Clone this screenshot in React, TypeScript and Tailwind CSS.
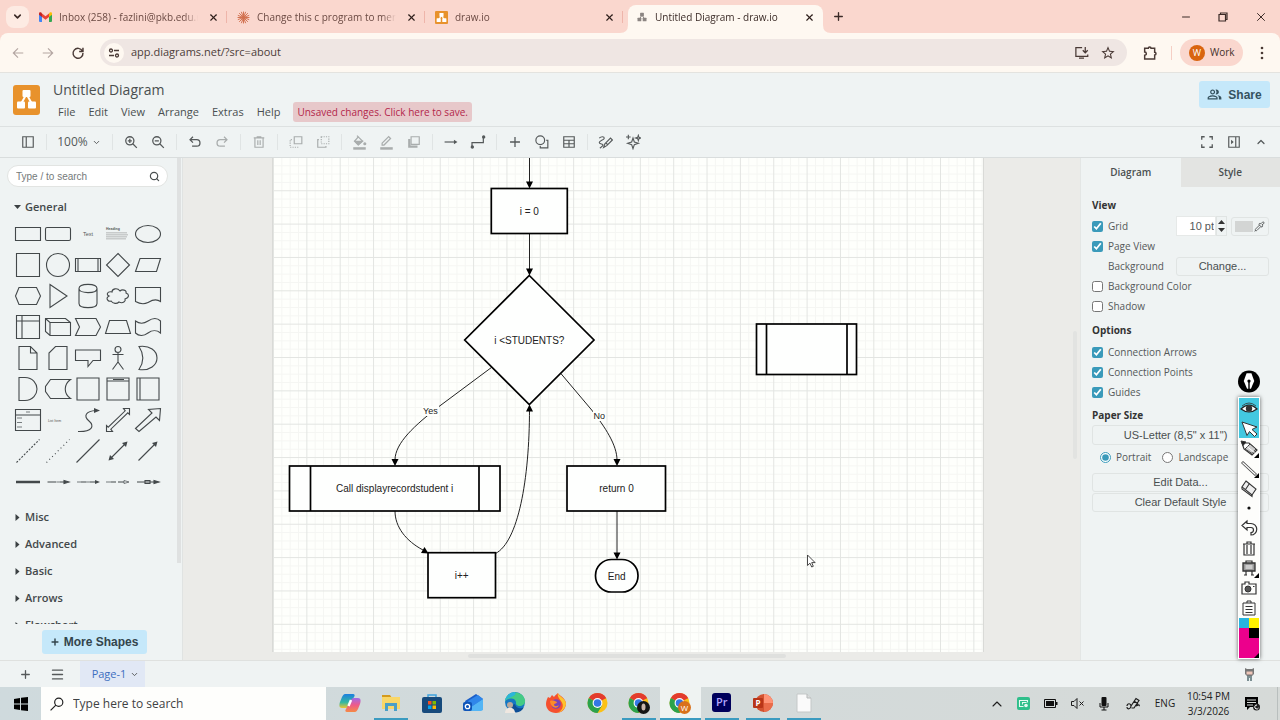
import type { ReactNode } from "react";
import { MdStarBorder, MdOutlinePeopleAlt } from "react-icons/md";
import { ChevronDown, ChevronUp, X, Plus, Menu, Search, Pipette, Minus } from "lucide-react";

const ui = "font-['Open_Sans','Noto_Sans',sans-serif]";
const arial = "font-['Liberation_Sans',Arial,sans-serif]";

function Ico({ size = 16, box = "0 0 24 24", w = 2, children }: { size?: number; box?: string; w?: number; children: ReactNode }) {
  return (
    <svg width={size} height={size} viewBox={box} fill="none" stroke="currentColor" strokeWidth={w} aria-hidden="true" className="shrink-0">
      {children}
    </svg>
  );
}

/* ---------- Browser chrome ---------- */

function DrawioLogo({ size, fg = "#fff", bg = "#e8922c" }: { size: number; fg?: string; bg?: string }) {
  return (
    <svg width={size} height={size} viewBox="0 0 24 24" aria-hidden="true" className="shrink-0">
      <rect width="24" height="24" rx="2" fill={bg} />
      <path d="M12 8 7 16M12 8l5 8" stroke={fg} strokeWidth="2" />
      <rect x="8.2" y="3.500" width="7.600" height="7" rx="1" fill={fg} />
      <rect x="3" y="13.500" width="7.600" height="7" rx="1" fill={fg} />
      <rect x="13.400" y="13.500" width="7.600" height="7" rx="1" fill={fg} />
    </svg>
  );
}

const GmailIcon = (
  <svg width="13" height="10" viewBox="0 0 26 20" aria-hidden="true" className="shrink-0">
    <path d="M0 3v15a2 2 0 0 0 2 2h4V7z" fill="#4285f4" />
    <path d="M26 3v15a2 2 0 0 1-2 2h-4V7z" fill="#34a853" />
    <path d="M6 3v7l7 5.5 7-5.5V3l-7 5.5z" fill="#ea4335" />
    <path d="M0 3v2.5L6 10V2.5L4.500 1C2.500-.5 0 .8 0 3z" fill="#c5221f" />
    <path d="M26 3v2.500L20 10V2.500L21.500 1C23.500-.5 26 .8 26 3z" fill="#fbbc04" />
  </svg>
);

const ClaudeIcon = (
  <svg width="13" height="13" viewBox="-12 -12 24 24" stroke="#d2714f" strokeWidth="1.800" aria-hidden="true" className="shrink-0">
    <path d="M0-11V11M-11 0H11M-8-8 8 8M8-8-8 8M-4-10.500 4 10.500M4-10.500-4 10.500M-10.500-4 10.500 4M-10.500 4 10.500-4" />
  </svg>
);

function Tab({ icon, title, active }: { icon: ReactNode; title: string; active?: boolean }) {
  return (
    <div
      className={
        active
          ? "relative flex h-7 w-[195px] items-center self-end rounded-t-lg bg-[#fef8f1] pb-1 pl-2 text-[#3b2b27]"
          : "flex h-7 w-[198px] items-center self-end pb-1 pl-[10px] text-[#6b4a43]"
      }
    >
      {active && (
        <svg width="211" height="8" viewBox="0 0 211 8" className="absolute bottom-0 -left-2" aria-hidden="true">
          <path d="M0 8Q8 8 8 0V8zM203 0Q203 8 211 8H203z" fill="#fef8f1" />
        </svg>
      )}
      {icon}
      <span className="ml-[7px] w-[139px] overflow-hidden text-[10px] whitespace-nowrap [mask-image:linear-gradient(to_right,black_90%,transparent)]">{title}</span>
      <button aria-label={"Close " + title} className="ml-[7px] flex w-4 justify-center text-[#2e1f1c]">
        <X size={11} strokeWidth={2.500} />
      </button>
      {!active && <span className="ml-auto h-3 w-px bg-[#eeb5aa]" />}
    </div>
  );
}

function TabStrip() {
  return (
    <div className="flex h-[33px] shrink-0 items-center bg-[#fad7ce] pl-[6px] text-[#3b2b27]">
      <button aria-label="Search tabs" className="flex h-[22px] w-[23px] items-center justify-center rounded-lg bg-[#fdebe3]">
        <ChevronDown size={11} strokeWidth={3.500} />
      </button>
      <div className="flex h-full items-center">
        <Tab icon={GmailIcon} title="Inbox (258) - fazlini@pkb.edu.my" />
        <Tab icon={ClaudeIcon} title="Change this c program to merm" />
        <Tab icon={<DrawioLogo size={13} />} title="draw.io" />
        <div className="flex h-full pl-[5px]">
          <Tab active icon={<DrawioLogo size={12} bg="none" fg="#8c8582" />} title="Untitled Diagram - draw.io" />
        </div>
      </div>
      <button aria-label="New tab" className="ml-[9px]">
        <Plus size={13} strokeWidth={2.500} />
      </button>
      <div className="ml-auto flex items-center">
        <button aria-label="Minimize" className="flex w-[37px] justify-center"><Minus size={12} strokeWidth={2} /></button>
        <button aria-label="Restore" className="flex w-[38px] justify-center">
          <Ico size={10} box="0 0 10 10" w={1.200}><path d="M1 2.500h6.500V9H1zM2.500 2.500V1H9v6.500H7.500" /></Ico>
        </button>
        <button aria-label="Close window" className="flex w-[38px] justify-center"><X size={14} strokeWidth={1.700} /></button>
      </div>
    </div>
  );
}

function AddressBar() {
  return (
    <div className="flex h-10 shrink-0 items-center rounded-t-lg border-b border-[#e4e3df] bg-[#fef8f1] pl-[3px] text-[#4a3a36]">
      <button aria-label="Back" className="flex w-[30px] justify-center text-[#b3a6a2]">
        <Ico size={14}><path d="M21 12H4M12 4l-8 8 8 8" /></Ico>
      </button>
      <button aria-label="Forward" className="flex w-[30px] justify-center text-[#b3a6a2]">
        <Ico size={14}><path d="M3 12h17M12 4l8 8-8 8" /></Ico>
      </button>
      <button aria-label="Reload" className="flex w-[30px] justify-center">
        <Ico size={14} w={2.500}><path d="M19.500 8.500A8.500 8.500 0 1 0 20.500 12M20.500 3v6.500H14" /></Ico>
      </button>
      <div className="ml-[7px] flex h-[27px] flex-1 items-center rounded-full bg-[#efe6e3] pr-3 pl-1">
        <button aria-label="Site information" className="flex size-5 items-center justify-center rounded-full bg-[#fef8f1]">
          <Ico size={12} w={2.600}><circle cx="6" cy="7" r="3" /><path d="M12 7h10M2 17h10" /><circle cx="18" cy="17" r="3" /></Ico>
        </button>
        <input aria-label="Address" readOnly value="app.diagrams.net/?src=about" className="ml-[7px] min-w-0 flex-1 bg-transparent text-[11px] text-[#4d3d39] outline-none" />
        <button aria-label="Install app" className="flex w-[27px] justify-center">
          <Ico size={15} w={2}><path d="M13 4H3v14h19v-3M8 21h8M18 3v9M14 8.500l4 4 4-4" /></Ico>
        </button>
        <button aria-label="Bookmark" className="-mr-[6px] flex w-[26px] justify-center"><MdStarBorder size={16} /></button>
      </div>
      <button aria-label="Extensions" className="ml-[15px]">
        <Ico size={16} w={2.200}><path d="M4 5h5.500a2 2 0 1 1 4 0H19v6a2 2 0 1 1 0 4v6H4v-5.500a2.500 2.500 0 0 0 0-5z" /></Ico>
      </button>
      <span className="ml-[13px] h-[14px] w-px bg-[#f5cfc5]" />
      <button className="ml-2 flex h-[27px] w-[63px] items-center rounded-full bg-[#fad7ce] pl-[9px] text-[10px] text-[#44302b]">
        <span className="mr-[5px] flex size-4 items-center justify-center rounded-full bg-[#d9640f] text-[9px] text-white">W</span>
        Work
      </button>
      <button aria-label="Menu" className="mr-3 ml-[12px] flex w-[13px] justify-center">
        <svg width="4" height="14" fill="currentColor" aria-hidden="true"><circle cx="2" cy="2" r="1.300" /><circle cx="2" cy="7" r="1.300" /><circle cx="2" cy="12" r="1.300" /></svg>
      </button>
    </div>
  );
}

/* ---------- Application header ---------- */

function Header() {
  return (
    <header className="flex h-[54px] shrink-0 items-start border-b border-[#dde1e1] bg-[#eff3f3] text-[#4a4f50]">
      <svg width="27" height="30" viewBox="0 0 27 30" className="mt-3 ml-[13px]" aria-hidden="true">
        <rect width="27" height="30" rx="3" fill="#e8922c" />
        <path d="M13.500 9 8 19M13.500 9l5.500 10" stroke="#fff" strokeWidth="2" />
        <rect x="9.500" y="5" width="8" height="7" rx="1" fill="#fff" />
        <rect x="4" y="16.500" width="8" height="7" rx="1" fill="#fff" />
        <rect x="15" y="16.500" width="8" height="7" rx="1" fill="#fff" />
      </svg>
      <div className="ml-[13px] pt-[6px]">
        <h1 className="text-[14px] leading-[22px]">Untitled Diagram</h1>
        <nav className="mt-px flex h-5 items-center gap-[13px] pl-[5px] text-[11px]">
          <a href="#file">File</a>
          <a href="#edit">Edit</a>
          <a href="#view">View</a>
          <a href="#arrange">Arrange</a>
          <a href="#extras">Extras</a>
          <a href="#help">Help</a>
          <button className="h-5 rounded-[3px] bg-[#e7c8ca] px-1 text-[10px] whitespace-nowrap text-[#b3264b]">Unsaved changes. Click here to save.</button>
        </nav>
      </div>
      <button className={`mt-2 mr-[10px] ml-auto flex h-[27px] w-[71px] items-center justify-center gap-[6px] rounded-[3px] bg-[#c5e8fa] text-[12px] font-bold text-[#35525f] ${arial}`}>
        <MdOutlinePeopleAlt size={15} />
        Share
      </button>
    </header>
  );
}

function Tool({ label, dim, children }: { label: string; dim?: boolean; children: ReactNode }) {
  return (
    <button aria-label={label} className={dim ? "flex w-[27px] justify-center text-[#a9adad]" : "flex w-[27px] justify-center text-[#55595a]"}>
      {children}
    </button>
  );
}

const Sep = () => (
  <span className="flex w-[10px] shrink-0 justify-center"><span className="h-4 w-px bg-[#e0e4e4]" /></span>
);

function Toolbar() {
  return (
    <div className="flex h-[31px] shrink-0 items-center border-b border-[#d9dddd] bg-[#eff3f3] pl-[14px]">
      <Tool label="Shapes panel"><Ico size={14}><path d="M3 3h18v18H3zM9 3v18" /></Ico></Tool>
      <Sep />
      <button className="flex h-5 w-[56px] items-center justify-center gap-1 text-[12px] text-[#55595a]">
        100%<ChevronDown size={9} strokeWidth={2.500} />
      </button>
      <Sep />
      <Tool label="Zoom in"><Ico size={14} w={2.200}><circle cx="10" cy="10" r="7" /><path d="m15 15 7 7M10 6.500v7M6.500 10h7" /></Ico></Tool>
      <Tool label="Zoom out"><Ico size={14} w={2.200}><circle cx="10" cy="10" r="7" /><path d="m15 15 7 7M6.500 10h7" /></Ico></Tool>
      <Sep />
      <Tool label="Undo"><Ico size={14} w={2.200}><path d="M8.500 3 3.500 8l5 5M4 8h11a5.500 5.500 0 0 1 0 11H7" /></Ico></Tool>
      <Tool label="Redo" dim><Ico size={14} w={2.200}><path d="m15.500 3 5 5-5 5M20 8H9a5.500 5.500 0 0 0 0 11h8" /></Ico></Tool>
      <Sep />
      <Tool label="Delete" dim><Ico size={14} w={2}><path d="M3 5h18M9 5V3h6v2M5 5v16h14V5M10 9v8M14 9v8" /></Ico></Tool>
      <Sep />
      <Tool label="To front" dim><Ico size={14} w={2}><path d="M9 3h13v12H9z" /><path d="M5 8H2v13h13v-3" strokeDasharray="2 2" /></Ico></Tool>
      <Tool label="To back" dim><Ico size={14} w={2}><path d="M9 3h13v12H9z" strokeDasharray="2 2" /><path d="M5 8H3v13h14v-2" /></Ico></Tool>
      <Sep />
      <Tool label="Fill color" dim>
        <Ico size={15} w={2}><path d="M8 1l3 3M10 3l7 7-7 6-6-6z" /><path d="M5 10h11l-6 5.500z" fill="currentColor" /><circle cx="20.500" cy="14" r="1.500" fill="currentColor" /><path d="M2 21.500h20" strokeWidth="4" /></Ico>
      </Tool>
      <Tool label="Line color" dim><Ico size={15} w={2}><path d="M5 13 15.500 2.500l3 3L8 16H5z" /><path d="M2 21.500h20" strokeWidth="4" /></Ico></Tool>
      <Tool label="Shadow" dim><Ico size={14} w={2}><path d="M7 3h14v13H7z" /><path d="M4 7v13h14" strokeWidth="4" /></Ico></Tool>
      <Sep />
      <Tool label="Connection"><Ico size={14} w={2}><path d="M1 12h18" /><path d="m17 8 6 4-6 4z" fill="currentColor" stroke="none" /></Ico></Tool>
      <Tool label="Waypoints"><Ico size={16} w={1.800}><path d="M3 19v-6h17V5" /><circle cx="3.500" cy="19.500" r="1.600" fill="currentColor" /><circle cx="20.500" cy="4.500" r="1.600" fill="currentColor" /></Ico></Tool>
      <Sep />
      <Tool label="Insert"><Ico size={14} w={2.200}><path d="M12 3.500v17M3.500 12h17" /></Ico></Tool>
      <Tool label="Shapes"><Ico size={14} w={2}><circle cx="9" cy="9" r="7.500" /><path d="M19 9h3v13H9v-3" /></Ico></Tool>
      <Tool label="Table"><Ico size={14} w={2}><path d="M3 3h18v18H3zM3 9h18M3 15h18M12 9v12" /></Ico></Tool>
      <Sep />
      <Tool label="Freehand"><Ico size={15} w={1.800}><path d="M2 5c3-3 8-3 8 0S2 9 2 12s6 2 6 4-4 4-5 5M9 20l2-6 9-9 3 3-9 9zM13 13l3 3" /></Ico></Tool>
      <Tool label="Generate"><Ico size={16} w={1.700}><path d="m12 6 2 6 6 2-6 2-2 6-2-6-6-2 6-2zM5 1v7M1.500 4.500h7M20 2l1 3 3 1-3 1-1 3-1-3-3-1 3-1z" /></Ico></Tool>
      <div className="mr-[6px] ml-auto flex items-center">
        <Tool label="Fullscreen"><Ico size={14} w={2.200}><path d="M8 3H3v5M16 3h5v5M8 21H3v-5M16 21h5v-5" /></Ico></Tool>
        <Tool label="Format panel"><Ico size={14} w={2}><path d="M3 3h18v18H3zM15 3v18" /><path d="m7 8 4.500 4L7 16z" fill="currentColor" stroke="none" /></Ico></Tool>
        <Tool label="Collapse"><ChevronUp size={12} strokeWidth={2.500} /></Tool>
      </div>
    </div>
  );
}

/* ---------- Shape library ---------- */

const shapes: ReactNode[] = [
  <path d="M-12.500-6.500h25v13h-25z" />,
  <rect x="-12.500" y="-6.500" width="25" height="13" rx="1.500" />,
  <text x="0" y="2" fontSize="5.500" textAnchor="middle" fill="#555" stroke="none">Text</text>,
  <g stroke="none" fill="#555"><text x="-12" y="-4" fontSize="3.500" fontWeight="bold">Heading</text><path d="M-12-1.500h21v.7h-21zM-12 .5H10v.7h-22zM-12 2.500H9v.7h-21zM-12 4.500H8v.7h-20z" opacity=".5" /></g>,
  <ellipse rx="12.500" ry="8.500" />,
  <path d="M-11.500-11.500h23v23h-23z" />,
  <circle r="11.500" />,
  <path d="M-12.500-6.500h25v13h-25zM-10-6.500v13M10-6.500v13" />,
  <path d="M0-11.500 11.500 0 0 11.500-11.500 0z" />,
  <path d="M-8-6.500h20.500l-4 13h-21z" />,
  <path d="M-9-8.500H8.500l4 8.500-4 8.500H-9l-3.500-8.500z" />,
  <path d="M-8-11.500 9 0-8 11.500z" />,
  <path d="M-9-7.500c0-5.500 18-5.500 18 0v15c0 5.500-18 5.500-18 0zc0 5.500 18 5.500 18 0" />,
  <path d="M-6-4c-5-1-6 3-3 4-4 2-1 6 2 5 2 3 6 3 8 1 4 2 7-1 6-3 5-2 4-5 1-6 1-3-4-4-6-2-3-4-8-2-8 1z" />,
  <path d="M-12.500-8.500h25v14C7 1.500 1 6 0 6.500c-4 2-9 1-12.500-1z" />,
  <path d="M-11.500-11.500h23v23h-23zM-6-11.500v23M-11.500-6h23" />,
  <path d="M-12.500-8.500h20l5 4v13h-20.500l-4.500-4zM-12.500-8.500l4.500 4v13M-8-4.500h20.500" />,
  <path d="M-12.500-8.500H8L12.500 0 8 8.500h-20.500L-8.500 0z" />,
  <path d="M-8.500-6.500h17l4 13h-25z" />,
  <path d="M-12.500-6c4 3 8 3 12.500 0S9-9.500 12.500-6V6C9 3 4 3 0 6s-9 3.500-12.500 0z" />,
  <path d="M-9-11.500H2.500L9-5v16.500H-9zM2.500-11.500V-5H9" />,
  <path d="M-2.500-11.500H9v23H-9V-5z" />,
  <path d="M-12.500-8h25V2.500H5L0 8.500v-6h-12.500z" />,
  <path d="M0-6v10M0 4l-5.500 7.500M0 4l5.500 7.500M-5.500-3.500h11M3-8.500a3 3 0 1 1-6 0 3 3 0 1 1 6 0" />,
  <path d="M-9-11.500C2-13 9-7 9 0S2 13-9 11.500C-4 4-4-4-9-11.500z" />,
  <path d="M-9-11.500h6C5-11.500 9-5 9 0S5 11.500-3 11.500h-6z" />,
  <path d="M-7.500-9.500h20c-7 5-7 14 0 19h-20l-5-7v-5z" />,
  <path d="M-11-11h22v22h-22z" />,
  <path d="M-11-11h22v22h-22zM-11-8h22M-5-9.500H6" />,
  <path d="M-11-11h22v22h-22zM-8-11v22" />,
  <g><path d="M-12.500-10.500h25v21h-25zM-12.500-5h25" /><path d="M-2-8h4M-11-2h5M-11 2.500h5M-11 7h5" strokeWidth=".7" /></g>,
  <text x="-3.500" y="1.500" fontSize="3.500" textAnchor="middle" fill="#555" stroke="none">List Item</text>,
  <g><path d="M-10 11.500C4 12 7 6 1 1S-2-9 8-9.500" /><path d="M6-12l6 2.500-6 2.500z" fill="currentColor" stroke="none" /></g>,
  <path d="M-11.500 11.500v-6l1.700 1.700L7.200-9.200 5.500-11.500h6v6l-1.700-1.700L-7.200 9.200l1.700 2.300z" />,
  <path d="M-12.500 8.500 4-7 .5-10.500l12-1-1 12L8-3-9 11.500z" />,
  <path d="M-11.500 11.500l23-23" strokeDasharray="2 1.500" />,
  <path d="M-11.500 11.500l23-23" strokeDasharray="1 3" />,
  <path d="M-11.500 11.500l23-23" />,
  <g><path d="M-7 7l14-14" /><path d="M-9.500 9.500l1.500-5.500 4 4zM9.500-9.500l-1.500 5.500-4-4z" fill="currentColor" stroke="none" /></g>,
  <g><path d="M-9.500 9.500l17-17" /><path d="M9.500-9.500l-1.500 5.500-4-4z" fill="currentColor" stroke="none" /></g>,
  <path d="M-12 0h24" strokeWidth="2.500" />,
  <g><path d="M-10.500 0h9M2 0h6" /><path d="M-1 0h3" strokeWidth=".7" /><path d="M6-1.500l5 1.500-5 1.500z" fill="currentColor" /></g>,
  <g><path d="M-7 0h5M2 0h6" /><path d="M-11 0h4M-2 0h4" strokeWidth=".7" /><path d="M7-2l5 2-5 2z" fill="currentColor" stroke="none" /></g>,
  <g><path d="M-7 0h5M0 0h6" /><path d="M-12 0h5" strokeWidth=".7" /><path d="M6-1.500l5 1.500-5 1.500z" strokeWidth=".7" /></g>,
  <g><path d="M-11 0h20M-3-1.500h5v3h-5z" /><path d="M6-1.500l5 1.500-5 1.500z" fill="currentColor" /></g>,
];

function Section({ name, open }: { name: string; open?: boolean }) {
  return (
    <button className="flex h-[27px] w-full shrink-0 items-center pl-[14px] text-left text-[11px] font-semibold text-[#43484a]">
      <svg width="7" height="7" viewBox="0 0 7 7" fill="#3b4042" aria-hidden="true" className="mr-1">
        {open ? <path d="M0 1h7L3.500 5z" /> : <path d="M1.500 0v7l4-3.500z" />}
      </svg>
      {name}
    </button>
  );
}

function Sidebar() {
  return (
    <aside className="flex w-[183px] shrink-0 flex-col border-r border-[#e0e3e2] bg-[#eff3f3]">
      <div className="flex min-h-0 flex-1 justify-between">
        <div className="flex w-[168px] flex-col overflow-hidden">
          <label className="mt-[7px] ml-[7px] flex h-[22px] shrink-0 items-center rounded-full border border-[#e2e4e2] bg-white pr-[7px] pl-2 text-[#4a4f50]">
            <input aria-label="Search shapes" placeholder="Type / to search" className={`w-full bg-transparent text-[10px] outline-none placeholder:text-[#757a7a] ${arial}`} />
            <Search size={11} strokeWidth={2.600} className="shrink-0" />
          </label>
          <div className="mt-[7px]"><Section name="General" open /></div>
          <div className="-mt-[3px] ml-[13px] grid shrink-0 grid-cols-[repeat(5,30px)] text-[#43484a]">
            {shapes.map((s, i) => (
              <div key={i} className="flex h-[31px] items-center justify-center">
                <svg width="30" height="30" viewBox="-15 -15 30 30" fill="none" stroke="currentColor" strokeWidth="1.100" className={arial} aria-hidden="true">{s}</svg>
              </div>
            ))}
          </div>
          <div className="mt-[7px]">
            <Section name="Misc" />
            <Section name="Advanced" />
            <Section name="Basic" />
            <Section name="Arrows" />
            <Section name="Flowchart" />
          </div>
        </div>
        <div className="mr-px h-[87%] w-1 bg-[#dfe1e1]" />
      </div>
      <div className="flex h-9 shrink-0 justify-center pt-[6px] pl-[6px]">
        <button className={`flex h-6 w-[105px] items-center justify-center gap-1 rounded-[3px] bg-[#c5e8fa] text-[12px] font-bold whitespace-nowrap text-[#33444c] ${arial}`}>
          <Plus size={10} strokeWidth={3.500} />
          More Shapes
        </button>
      </div>
    </aside>
  );
}

/* ---------- Canvas ---------- */

const minorX = Array.from({ length: 86 }, (_, i) => 273.5 + i * 8.3375);
const minorY = Array.from({ length: 60 }, (_, i) => 157.4 + i * 8.3375);

function Flowchart() {
  return (
    <svg viewBox="273 158 710 494" width="710" height="494" className={`block bg-[#fefffc] ${arial}`} role="img" aria-label="Flowchart">
      {minorX.map((x, i) => i % 4 !== 0 && <path key={"x" + i} d={`M${x} 158V652`} stroke="#f5f6f3" />)}
      {minorY.map((y, i) => i % 4 !== 0 && <path key={"y" + i} d={`M273 ${y}H983`} stroke="#f5f6f3" />)}
      {minorX.map((x, i) => i % 4 === 0 && <path key={"mx" + i} d={`M${x} 158V652`} stroke="#e3e5e2" />)}
      {minorY.map((y, i) => i % 4 === 0 && <path key={"my" + i} d={`M273 ${y}H983`} stroke="#e3e5e2" />)}
      <g fill="none" stroke="#222" strokeWidth="1">
        <path d="M529.500 158V184M529.500 234V270" />
        <path d="M491.700 367.300 439 406.500C415 425 395 443 395 460" />
        <path d="M560.700 373.300 591.700 410C605 427 617 445 617 460" />
        <path d="M617 511V554" />
        <path d="M395 511C395 527 406 541 423 550" />
        <path d="M495.500 553.500C518 542 529.500 480 529.500 409" />
      </g>
      <g fill="#000">
        <path d="M526 181.500h7l-3.500 7zM526 268.500h7l-3.500 7zM391.500 459h7l-3.500 7zM613.500 459h7l-3.500 7zM613.500 552.500h7l-3.500 7zM526 411.500h7l-3.500-7zM428.500 553.500l-7.500-.5 3.500-6z" />
      </g>
      <g fill="#fefffe" stroke="#000" strokeWidth="1.700">
        <rect x="491.300" y="188.500" width="76" height="45" />
        <path d="M529.300 275.500 594 340 529.300 404.500 464.700 340z" />
        <rect x="289.500" y="466" width="210.500" height="45" />
        <path d="M310.500 466v45M479 466v45" />
        <rect x="567" y="466" width="98.500" height="45" />
        <rect x="428" y="552.700" width="67.500" height="45" />
        <rect x="595.500" y="559.500" width="42.500" height="32.500" rx="16" />
        <rect x="756.500" y="324" width="100" height="50.500" />
        <path d="M766.500 324v50.500M847 324v50.500" />
      </g>
      <path d="M422 406h17v10h-17zM593 411h13v10h-13z" fill="#fefffc" />
      <g fill="#222" fontSize="10" textAnchor="middle">
        <text x="529.300" y="215">i = 0</text>
        <text x="529.300" y="344">i &lt;STUDENTS?</text>
        <text x="394.700" y="492">Call displayrecordstudent i</text>
        <text x="616.500" y="492">return 0</text>
        <text x="461.700" y="579">i++</text>
        <text x="616.700" y="580">End</text>
      </g>
      <g fill="#222" fontSize="9" textAnchor="middle">
        <text x="430.300" y="414">Yes</text>
        <text x="599.300" y="419">No</text>
      </g>
      <path d="M807.500 555v10.500l2.500-2.300 1.700 3.800 1.600-.7-1.600-3.700h3.400z" fill="#fff" stroke="#333" strokeWidth=".9" />
    </svg>
  );
}

function Canvas() {
  return (
    <main className="flex min-w-0 flex-1 flex-col bg-[#ebebe8]">
      <div className="flex min-h-0 flex-1">
        <div className="flex min-w-0 flex-1 justify-center overflow-hidden"><div className="shadow-[-1px_0_0_#d9dad7,1px_0_0_#d9dad7]"><Flowchart /></div></div>
        <div className="flex w-[7px] items-center pb-5"><div className="h-32 w-1 rounded-sm bg-[#e2e3e1]" /></div>
      </div>
      <div className="flex h-2 items-center justify-center pr-[9px]"><div className="h-1 w-[318px] rounded-sm bg-[#dfe0de]" /></div>
    </main>
  );
}

/* ---------- Format panel ---------- */

function Check({ label, on }: { label: string; on?: boolean }) {
  return (
    <label className="flex h-5 items-center">
      <input type="checkbox" defaultChecked={on} className="mr-[5px] size-[11px] accent-[#3a9aba]" />
      {label}
    </label>
  );
}

const boxed = "rounded-[3px] border border-[#e0e4e3] bg-[#eff3f3] text-center text-[11px] text-[#4a4f50]";

function FormatPanel() {
  return (
    <aside className="flex w-[200px] shrink-0 flex-col border-l border-[#e3e6e5] bg-[#eff3f3] text-[10px] text-[#55595a]">
      <div className="flex h-[29px] shrink-0 text-[10px] font-semibold text-[#4a4f50]">
        <button className="flex-1">Diagram</button>
        <button className="flex-1 bg-[#e3e4e2]">Style</button>
      </div>
      <div className="pt-2 pr-[11px] pl-[11px]">
        <h2 className="h-5 text-[10px] leading-5 font-bold text-[#333]">View</h2>
        <div className="mt-px flex items-center">
          <Check label="Grid" on />
          <div className="-my-px ml-auto flex h-5 items-center">
            <input aria-label="Grid size" defaultValue="10 pt" className={`h-5 w-10 border border-[#e6e9e8] bg-white pr-px text-right text-[11px] outline-none ${arial}`} />
            <span className="mr-1 flex h-5 w-[11px] flex-col justify-between border border-[#e0e4e3] py-[3px]">
              <button aria-label="Increase"><svg width="7" height="4" className="mx-auto" aria-hidden="true"><path d="M0 4h7L3.500 0z" fill="#333" /></svg></button>
              <button aria-label="Decrease"><svg width="7" height="4" className="mx-auto" aria-hidden="true"><path d="M0 0h7L3.500 4z" fill="#333" /></svg></button>
            </span>
            <button aria-label="Grid color" className="flex h-[19px] w-[38px] items-center justify-between rounded-[3px] border border-[#e0e4e3] px-[3px]">
              <span className="h-[11px] w-[18px] bg-[#d3d5d4]" />
              <Pipette size={11} strokeWidth={2} />
            </button>
          </div>
        </div>
        <Check label="Page View" on />
        <div className="flex h-5 items-center justify-between pl-4">
          Background
          <button className={`h-[19px] w-[93px] ${boxed} ${arial}`}>Change...</button>
        </div>
        <Check label="Background Color" />
        <Check label="Shadow" />
        <h2 className="mt-1 h-5 text-[10px] leading-5 font-bold text-[#333]">Options</h2>
        <div className="mt-[2px]">
          <Check label="Connection Arrows" on />
          <Check label="Connection Points" on />
          <Check label="Guides" on />
        </div>
        <h2 className="mt-[3px] h-5 text-[10px] leading-5 font-bold text-[#333]">Paper Size</h2>
        <select aria-label="Paper size" className={`block h-5 w-full appearance-none pr-[10px] ${boxed} ${arial}`}>
          <option>US-Letter (8,5" x 11")</option>
        </select>
        <div className="mt-[2px] flex h-5 items-center gap-[11px] pl-2">
          <label className="flex items-center gap-[5px]"><input type="radio" name="orientation" defaultChecked className="size-[11px] accent-[#3a9aba]" />Portrait</label>
          <label className="flex items-center gap-[5px]"><input type="radio" name="orientation" className="size-[11px] accent-[#3a9aba]" />Landscape</label>
        </div>
        <button className={`mt-[6px] block h-[19px] w-full ${boxed} ${arial}`}>Edit Data...</button>
        <button className={`mt-px block h-[19px] w-full ${boxed} ${arial}`}>Clear Default Style</button>
      </div>
    </aside>
  );
}

/* ---------- Floating pen toolbar ---------- */

const corner = <path d="M20 15v5h-5z" fill="#000" stroke="none" />;

const penTools: [string, ReactNode][] = [
  ["Pencil", <g><path d="M3 5l2 6 8 6 5-5-8-7z" strokeWidth="1.200" fill="#fff" /><path d="M6 11l5-5 6 5-4 4.500z" fill="#ccc" strokeWidth=".9" /><path d="M8.500 9l7 5.500" stroke="#fff" strokeWidth="1" /><path d="M2 3l5 1-3 3.500z" fill="#222" />{corner}</g>],
  ["Line", <g><path d="M3 4 17 17" stroke="#444" strokeWidth="3" /><path d="M3.500 4.500 16.500 16.500" stroke="#fff" strokeWidth="1.300" />{corner}</g>],
  ["Eraser", <g><path d="M7 3l10 8-4 6L3 9z" strokeWidth="1.100" fill="#eee" /><path d="M6.500 11.500l4-6M3 9v2l10 7.500V17" strokeWidth="1.100" /></g>],
  ["Size", <circle cx="10" cy="10" r="1.600" fill="#111" stroke="none" />],
  ["Undo", <path d="M8 3 3 7.500 8 12V9.500h4a2.500 2.500 0 0 1 0 5v2.500a5 5 0 0 0 0-11.500H8z" strokeWidth="1.200" />],
  ["Clear", <path d="M4 6h12M8 6V4h4v2M5 6v11h10V6M8 7v9M12 7v9" strokeWidth="1.200" />],
  ["Board", <g><path d="M4 5h12v8H4z" strokeWidth="1.300" fill="#999" /><path d="M6.500 7h7v4h-7z" fill="#ccc" stroke="none" /><path d="M7 5V3h6v2M7 13v4M13 13v4M5 17h3M12 17h3" strokeWidth="1.200" />{corner}</g>],
  ["Screenshot", <g><path d="M3 6h3V4h4v2h7v10H3z" strokeWidth="1.200" /><circle cx="9" cy="11" r="3" fill="#555" /><path d="M14 8.500h1.500" /></g>],
  ["Paste", <path d="M4 5h12v12H4zM8 5V3h4v2M6.500 8.500h7M6.500 11.500h7M6.500 14.500h7" strokeWidth="1" />],
];

function PenToolbar() {
  return (
    <div className="absolute top-[212px] right-5 flex w-[22px] flex-col items-center gap-1 text-[#333]">
      <button aria-label="Pen">
        <svg width="22" height="23" viewBox="0 0 23 23" aria-hidden="true"><circle cx="11.500" cy="11.500" r="11.500" fill="#000" /><path d="M9 3h5l3 8-3.500 8h-4L6 11z" fill="#fff" /><path d="M11.500 11v9" stroke="#000" strokeWidth="1.500" /><circle cx="11.500" cy="11" r="1.700" /></svg>
      </button>
      <div className="w-[22px] border border-white bg-[#fdfdfb] shadow-[0_0_4px_rgba(0,0,0,0.6)]">
        <div className="bg-[#43c8e0]">
          <button aria-label="Show" className="block">
            <svg width="20" height="20" viewBox="0 0 20 20" aria-hidden="true"><path d="M2 11Q10 3 18 11 10 17 2 11z" fill="#fff" stroke="#222" strokeWidth="1.200" /><circle cx="10" cy="10.500" r="3.200" fill="#333" /><path d="M3 8Q10 2 17 8" fill="none" stroke="#333" strokeWidth=".8" /></svg>
          </button>
          <button aria-label="Select" className="block">
            <svg width="20" height="20" viewBox="0 0 20 20" aria-hidden="true"><path d="M3 4l15 5-5 2.500 5 4.500-2.500 2.500-5-5-2.500 4z" fill="#fff" stroke="#333" strokeWidth="1" /></svg>
          </button>
        </div>
        {penTools.map(([name, art]) => (
          <button key={name} aria-label={name} className="block">
            <svg width="20" height="20" viewBox="0 0 20 20" fill="none" stroke="currentColor" aria-hidden="true">{art}</svg>
          </button>
        ))}
        <div className="grid grid-cols-2">
          <span className="h-[10px] bg-[#27b5df]" />
          <span className="h-[10px] bg-[#fff200]" />
          <span className="h-[10px] bg-[#ec008c]" />
          <span className="h-[10px] bg-black" />
          <span className="col-span-2 flex h-5 items-end justify-end bg-[#ec008c]"><svg width="5" height="5" aria-hidden="true"><path d="M5 0v5H0z" /></svg></span>
        </div>
      </div>
    </div>
  );
}

/* ---------- Footer and taskbar ---------- */

function PageTabs() {
  return (
    <footer className="flex h-[27px] shrink-0 items-stretch border-t border-[#dfe1df] bg-[#eff3f3] text-[#55595a]">
      <button aria-label="Insert page" className="ml-[9px] flex w-8 items-center justify-center"><Plus size={13} strokeWidth={2.400} /></button>
      <button aria-label="Pages" className="flex w-8 items-center justify-center"><Menu size={15} strokeWidth={2.200} /></button>
      <button className="ml-[7px] flex w-[65px] items-center justify-center gap-1 bg-[#e1e8f5] pt-px pl-[6px] text-[11px] text-[#3d6fc0]">
        Page-1
        <ChevronDown size={9} strokeWidth={2.500} className="text-[#55595a]" />
      </button>
      <a href="#github" aria-label="GitHub" className="mr-6 ml-auto self-center">
        <svg width="13" height="13" viewBox="0 0 13 13" aria-hidden="true"><path d="M2 0l2 1h5l2-1v6L9 8H4L2 6z" fill="#777" /><path d="M3.500 3.500h6v3h-6z" fill="#eec5b8" /><path d="M4 8h5v5H4z" fill="#7b8e92" /><path d="M6 10h1v3H6z" fill="#e8f0f0" /></svg>
      </a>
    </footer>
  );
}

function ChromeArt({ children }: { children?: ReactNode }) {
  return (
    <svg width="22" height="22" viewBox="0 0 22 22" aria-hidden="true">
      <circle cx="10.500" cy="11" r="10" fill="#fbc116" />
      <path d="M10.500 11 1.840 6A10 10 0 0 1 19.160 6z" fill="#e33b2e" />
      <path d="M10.500 11 1.840 6A10 10 0 0 0 10.500 21L15 13.500z" fill="#2ba24c" />
      <path d="M10.500 6.200H19.300L19 6H10.500z" fill="#e33b2e" />
      <circle cx="10.500" cy="11" r="4.900" fill="#fff" />
      <circle cx="10.500" cy="11" r="3.800" fill="#3478e5" />
      {children}
    </svg>
  );
}

const apps: { name: string; state?: "open" | "active"; art: ReactNode }[] = [
  {
    name: "Copilot",
    art: (
      <svg width="22" height="20" viewBox="0 0 22 20" aria-hidden="true">
        <defs>
          <linearGradient id="cpA" x2="0" y2="1"><stop stopColor="#1c7fe0" /><stop offset=".6" stopColor="#35b8a0" /><stop offset="1" stopColor="#f0c531" /></linearGradient>
          <linearGradient id="cpB" x2="0" y2="1"><stop stopColor="#a06be8" /><stop offset=".5" stopColor="#ee5a8a" /><stop offset="1" stopColor="#f58b45" /></linearGradient>
        </defs>
        <path d="M6 1h8c2 0 2 2 1 3l-5 9c-1 2-2 2-4 2H3c-3 0-3-3-2-6l2-5c1-2 2-3 3-3z" fill="url(#cpA)" />
        <path d="M16 19H8c-2 0-2-2-1-3l5-9c1-2 2-2 4-2h3c3 0 3 3 2 6l-2 5c-1 2-2 3-3 3z" fill="url(#cpB)" />
        <path d="M12 7l-2.500 6" stroke="#fff" strokeWidth="2.500" />
      </svg>
    ),
  },
  {
    name: "File Explorer",
    state: "open",
    art: <svg width="20" height="18" viewBox="0 0 20 18" aria-hidden="true"><path d="M1 1h8l2 3H1z" fill="#d49a1d" /><path d="M1 3h18v12H1z" fill="#f9d768" /><path d="M4 17V9h12v8h-3v-5H7v5z" fill="#4b9fc6" /></svg>,
  },
  {
    name: "Microsoft Store",
    art: <svg width="20" height="20" viewBox="0 0 20 20" aria-hidden="true"><path d="M6 5V2h8v3" fill="none" stroke="#3fa2de" strokeWidth="1.500" /><rect y="4" width="20" height="16" rx="2" fill="#174a7c" /><path d="M6 8h3.500v3.500H6z" fill="#f25022" /><path d="M10.500 8H14v3.500h-3.500z" fill="#7fba00" /><path d="M6 12.500h3.500V16H6z" fill="#00a4ef" /><path d="M10.500 12.500H14V16h-3.500z" fill="#ffb900" /></svg>,
  },
  {
    name: "Outlook",
    art: <svg width="21" height="19" viewBox="0 0 21 19" aria-hidden="true"><path d="M2 8 13 1l7 5v10l-3 2H5z" fill="#1b5fc9" /><path d="M5 8 15 2l5 4-12 8z" fill="#2f86ea" /><path d="M8 14l12-8v11l-2 1H7z" fill="#53b5f5" /><rect y="9" width="9" height="9" rx="2" fill="#0f55b8" /><circle cx="4.500" cy="13.500" r="2.200" fill="none" stroke="#fff" strokeWidth="1.300" /></svg>,
  },
  {
    name: "Edge",
    art: <svg width="22" height="21" viewBox="0 0 22 21" aria-hidden="true"><circle cx="11" cy="10" r="10" fill="#1577c2" /><path d="M1 9C2-1 18-3 21 8c1 6-7 8-9 4 1-6-7-7-11-3z" fill="#45cb85" /><path d="M1 9C2 3 7 0 11 0c3 4-7 5-10 9z" fill="#2bb6d8" /><path d="M11 12c1 5 6 5 9 3-2 5-8 7-12 4-2-2-1-6 3-7z" fill="#0e4e96" /><circle cx="6" cy="13" r="3" fill="#b9a79c" /><path d="M1 21c0-7 10-7 10 0z" fill="#efe7e0" /></svg>,
  },
  {
    name: "Firefox",
    art: <svg width="20" height="20" viewBox="0 0 20 20" aria-hidden="true"><path d="M2 4l2 1 2-3 2 2c1-2 3-3 4-4 0 2 7 4 8 10 0 6-4 10-10 10S0 16 0 11c0-3 1-5 2-7z" fill="#f5502f" /><path d="M12 0c0 3 8 5 8 11-1 6-6 9-10 9 6-1 9-7 5-12-2-3-4-5-3-8z" fill="#fdc32e" /><circle cx="10" cy="11" r="4.800" fill="#7844b8" /><path d="M4 8c3-1 5 0 7 1 0 2-3 1-3 3 1 2 4 1 5 0-1 4-8 4-9-4z" fill="#fb8b29" /></svg>,
  },
  { name: "Chrome", art: <ChromeArt /> },
  {
    name: "Chrome, personal",
    state: "open",
    art: <ChromeArt><circle cx="15.500" cy="15.500" r="6.500" fill="#151515" /><ellipse cx="15.500" cy="15" rx="2" ry="3.500" fill="#c9b5aa" /></ChromeArt>,
  },
  {
    name: "Chrome, work",
    state: "active",
    art: <ChromeArt><circle cx="15.500" cy="15.500" r="6.500" fill="#d9711c" /><text x="15.500" y="18.500" fontSize="8" textAnchor="middle" fill="#fff">W</text></ChromeArt>,
  },
  {
    name: "Premiere Pro",
    state: "open",
    art: <span className="flex size-[19px] items-center justify-center rounded-[3px] bg-[#00005b] text-[11px] font-semibold text-[#b5a8ff]">Pr</span>,
  },
  {
    name: "PowerPoint",
    state: "open",
    art: <svg width="20" height="20" viewBox="0 0 20 20" aria-hidden="true"><circle cx="11" cy="10" r="9" fill="#d35230" /><path d="M11 1a9 9 0 0 1 9 9h-9z" fill="#ff9376" /><path d="M11 10h9a9 9 0 0 1-9 9z" fill="#ea6c4a" /><rect y="5" width="10" height="10" rx="1" fill="#b93518" /><text x="5" y="13" fontSize="8" fontWeight="bold" textAnchor="middle" fill="#fff">P</text></svg>,
  },
  {
    name: "Notepad",
    state: "open",
    art: <svg width="16" height="20" viewBox="0 0 16 20" aria-hidden="true"><path d="M1 1h10l4 4v14H1z" fill="#fafafa" stroke="#c4c8c8" /><path d="M11 1v4h4" fill="#ddd" stroke="#b5b9b9" /></svg>,
  },
];

function Taskbar() {
  return (
    <div className="flex h-[33px] shrink-0 items-stretch bg-linear-to-r from-[#cfdadd] to-[#d6dad8] text-[#1d1d1d]">
      <button aria-label="Start" className="flex w-[41px] items-center justify-center">
        <svg width="14" height="14" viewBox="0 0 14 14" aria-hidden="true"><path d="M0 2l6-1v5.500H0zM7 .8 14 0v6.500H7zM0 7.500h6V13l-6-1zM7 7.500h7V14l-7-.8z" /></svg>
      </button>
      <label className="flex w-[285px] items-center bg-[#fefefc] pl-[9px]">
        <Ico size={14} w={2}><circle cx="15" cy="9" r="7" /><path d="m10 14-9 9" /></Ico>
        <input aria-label="Search Windows" placeholder="Type here to search" className="ml-[9px] min-w-0 flex-1 bg-transparent text-[12px] outline-none placeholder:text-[#3f4243]" />
      </label>
      <div className="ml-[3px] flex w-[496px] justify-between">
        {apps.map((a) => (
          <button
            key={a.name}
            aria-label={a.name}
            className={a.state === "active" ? "flex w-[41px] flex-col items-center bg-[#eff3f2]" : "flex w-[41px] flex-col items-center"}
          >
            <span className="flex h-[31px] items-center">{a.art}</span>
            {a.state && <span className={a.state === "active" ? "h-[2px] w-full bg-[#3b9bc0]" : "h-[2px] w-[34px] bg-[#3b9bc0]"} />}
          </button>
        ))}
      </div>
      <div className="ml-auto flex items-center text-[10px]">
        <button aria-label="Hidden icons" className="flex w-[27px] justify-center"><ChevronUp size={16} strokeWidth={1.600} /></button>
        <span className="flex w-[27px] justify-center">
          <svg width="13" height="13" viewBox="0 0 13 13" aria-hidden="true"><rect width="13" height="13" rx="2" fill="#2fbf8b" /><path d="M10.500 5.500v-2h-8v6h4M9.500 5.500h-4v2" fill="none" stroke="#e6faf2" strokeWidth="1.100" /><circle cx="9" cy="8.500" r="1.800" fill="#e6faf2" /></svg>
        </span>
        <span className="flex w-[27px] justify-center">
          <svg width="14" height="9" viewBox="0 0 14 9" aria-hidden="true"><path d="M.5.5h11v8H.500z" fill="none" stroke="#111" /><path d="M2 2h8v5H2zM12 3h1.500v3H12z" fill="#111" /></svg>
        </span>
        <span className="flex w-[26px] justify-center">
          <Ico size={13} box="0 0 13 13" w={1}><path d="M.5 4.500H3l3-3v10l-3-3H.500zM8.500 4.500l4 4M12.500 4.500l-4 4" /></Ico>
        </span>
        <span className="flex w-[27px] justify-center">
          <svg width="10" height="14" viewBox="0 0 10 14" aria-hidden="true"><rect x="2.500" width="5" height="9" rx="1" fill="#111" /><path d="M1 6v4h8V6M5 10v3M2.500 13h5" fill="none" stroke="#111" /></svg>
        </span>
        <span className="flex w-[32px] justify-center">
          <Ico size={14} box="0 0 14 14" w={1.200}><path d="M1 9c0-3 4-3 4 0s-4 4-4 1M5 9l5-7.500 3 2L8 11H5.500M8 4l4 3M10 9c2-2 4-1 3 0" /></Ico>
        </span>
        <span className="flex w-[32px] justify-center">ENG</span>
        <div className="w-[55px] text-center leading-[15px] text-[#222]">
          <div>10:54 PM</div>
          <div>3/3/2026</div>
        </div>
        <button aria-label="Notifications" className="mr-[14px] ml-[5px] flex w-[22px] justify-center">
          <svg width="15" height="15" viewBox="0 0 15 15" aria-hidden="true"><path d="M0 1h13v10H5l-3 3v-3H0z" /><path d="M2 4h9M2 6.500h9M2 9h6" stroke="#d6dad8" /><circle cx="11.500" cy="11" r="3.500" fill="#222" /><path d="M12 9a2 2 0 1 0 1.500 3" fill="none" stroke="#fff" /></svg>
        </button>
        <span className="h-full w-px bg-[#b9bfbe]" />
        <span className="w-[2px]" />
      </div>
    </div>
  );
}

export default function App() {
  return (
    <div className={`flex h-screen flex-col overflow-hidden bg-[#fad7ce] ${ui}`}>
      <TabStrip />
      <AddressBar />
      <Header />
      <Toolbar />
      <div className="relative flex min-h-0 flex-1">
        <Sidebar />
        <Canvas />
        <FormatPanel />
        <PenToolbar />
      </div>
      <PageTabs />
      <Taskbar />
    </div>
  );
}
